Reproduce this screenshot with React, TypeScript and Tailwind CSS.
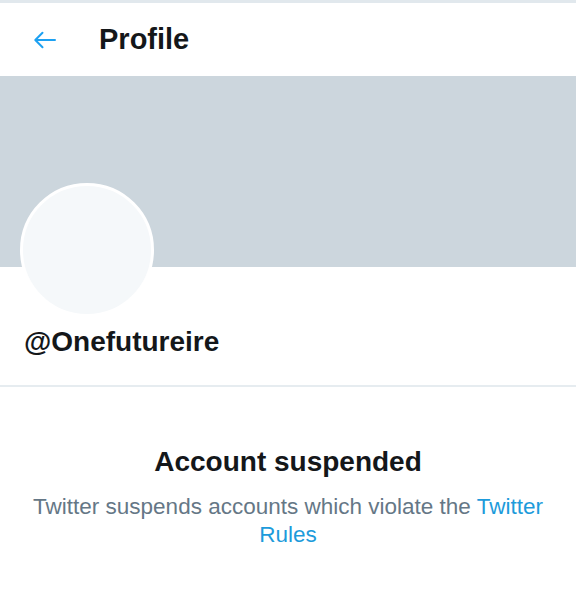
import React from "react";

function BackArrow() {
  return (
    <svg width="24" height="24" viewBox="0 0 24 24" fill="none" aria-hidden="true">
      <path
        d="M22 12H2.8M9.5 4.8L2.3 12l7.2 7.2"
        stroke="#1da1f2"
        strokeWidth="2"
        strokeLinecap="round"
        strokeLinejoin="round"
      />
    </svg>
  );
}

export default function App() {
  return (
    <div className="w-[576px] h-[591px] bg-white overflow-hidden font-['Liberation_Sans',Arial,sans-serif]">
      <div className="h-[3px] bg-[#e1e8ed]" />
      <header className="h-[73px] flex items-center">
        <a href="#" aria-label="Back" className="ml-[33px] mt-[1px] flex items-center">
          <BackArrow />
        </a>
        <h1 className="ml-[42px] text-[29px] font-bold text-[#14171a] leading-none">Profile</h1>
      </header>

      <div className="h-[191px] bg-[#ccd6dd]" />

      <div className="px-[20px]">
        <div className="-mt-[84px] w-[134px] h-[134px] rounded-full bg-[#f5f8fa] border-[3px] border-white" />
        <p className="mt-[9px] ml-[4px] text-[28px] font-bold text-[#14171a] leading-[32px]">
          @Onefutureire
        </p>
      </div>

      <div className="mt-[27px] h-[2px] bg-[#e6ecf0]" />

      <section className="pt-[58px] px-[24px] text-center">
        <h2 className="text-[28px] font-bold text-[#14171a] leading-[34px]">Account suspended</h2>
        <p className="mt-[14px] text-[22.5px] text-[#657786] leading-[28px]">
          Twitter suspends accounts which violate the{" "}
          <a href="#" className="text-[#1d9bdb]">
            Twitter Rules
          </a>
        </p>
      </section>
    </div>
  );
}
